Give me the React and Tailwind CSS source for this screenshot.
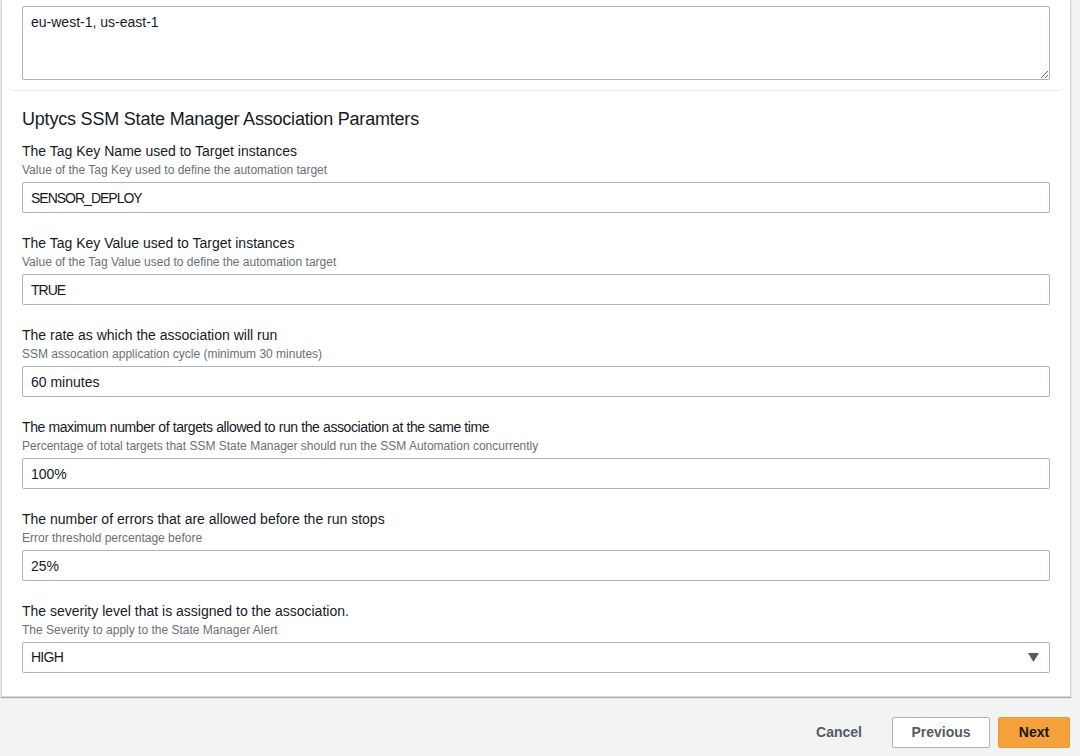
import { useState } from 'react';

const fields = [
  {
    label: 'The Tag Key Name used to Target instances',
    desc: 'Value of the Tag Key used to define the automation target',
    value: 'SENSOR_DEPLOY',
    valueClass: 'tracking-[-1px]',
  },
  {
    label: 'The Tag Key Value used to Target instances',
    desc: 'Value of the Tag Value used to define the automation target',
    value: 'TRUE',
    valueClass: 'tracking-[-1px]',
  },
  {
    label: 'The rate as which the association will run',
    desc: 'SSM assocation application cycle (minimum 30 minutes)',
    value: '60 minutes',
  },
  {
    label: 'The maximum number of targets allowed to run the association at the same time',
    labelClass: 'tracking-[-0.4px]',
    desc: 'Percentage of total targets that SSM State Manager should run the SSM Automation concurrently',
    value: '100%',
  },
  {
    label: 'The number of errors that are allowed before the run stops',
    desc: 'Error threshold percentage before',
    value: '25%',
  },
];

function Field({ label, labelClass = '', desc, children }) {
  return (
    <div className="flex flex-col">
      <label className={`text-[14px] leading-[20px] text-[#16191f] ${labelClass}`}>{label}</label>
      <p className="text-[12px] leading-[18px] text-[#687078]">{desc}</p>
      <div className="mt-[3px]">{children}</div>
    </div>
  );
}

export default function App() {
  const [values, setValues] = useState(fields.map(f => f.value));
  const [regions, setRegions] = useState('eu-west-1, us-east-1');
  const [severity, setSeverity] = useState('HIGH');

  return (
    <div
      className="h-[756px] overflow-hidden bg-[#f2f3f3] flex flex-col"
      style={{ fontFamily: '"Liberation Sans", Arial, sans-serif' }}
    >
      <div className="ml-[1px] w-[1070px] bg-white border border-t-0 border-[#d5dbdb] shadow-[0_1px_1px_rgba(0,28,36,0.3)] px-[20px] pb-[23px]">
        <p className="-mt-[16px] text-[12px] leading-[18px] text-[#687078]">
          Comma separated list of the regions in which the SSM State Manager association will be deployed (e.g. us-east-1)
        </p>
        <textarea
          value={regions}
          onChange={e => setRegions(e.target.value)}
          className="mt-[4px] block w-full h-[74px] border border-[#aab7b8] rounded-[2px] px-[8px] py-[5px] text-[14px] leading-[20px] text-[#16191f] outline-none"
        />
        <div className="-mx-[10px] mt-[10px] border-t border-[#eaeded]" />
        <h2 className="mt-[17px] text-[18px] leading-[22px] tracking-[-0.2px] text-[#16191f]">
          Uptycs SSM State Manager Association Paramters
        </h2>
        <div className="mt-[11px] flex flex-col gap-[20px]">
          {fields.map((f, i) => (
            <Field key={i} label={f.label} labelClass={f.labelClass} desc={f.desc}>
              <input
                value={values[i]}
                onChange={e => {
                  const next = [...values];
                  next[i] = e.target.value;
                  setValues(next);
                }}
                className={`block w-full h-[31px] border border-[#aab7b8] rounded-[2px] px-[8px] text-[14px] text-[#16191f] outline-none ${f.valueClass || ''}`}
              />
            </Field>
          ))}
          <Field
            label="The severity level that is assigned to the association."
            desc="The Severity to apply to the State Manager Alert"
          >
            <div className="relative">
              <select
                value={severity}
                onChange={e => setSeverity(e.target.value)}
                className="block w-full h-[31px] appearance-none bg-white border border-[#aab7b8] rounded-[2px] px-[8px] text-[14px] tracking-[-0.75px] text-[#16191f] outline-none"
              >
                <option>HIGH</option>
                <option>MEDIUM</option>
                <option>LOW</option>
              </select>
              <svg
                className="absolute right-[11px] top-[11px] pointer-events-none"
                width="11"
                height="9"
                viewBox="0 0 11 9"
              >
                <path d="M0 0 H11 L5.5 9 Z" fill="#545b64" />
              </svg>
            </div>
          </Field>
        </div>
      </div>

      <div className="mt-[20px] flex items-center justify-end pr-[10px] text-[14px] font-bold">
        <button className="h-[31px] px-[20px] text-[#545b64]">Cancel</button>
        <button className="ml-[10px] h-[31px] w-[98px] bg-white border border-[#aab7b8] rounded-[2px] text-[#545b64]">
          Previous
        </button>
        <button className="ml-[8px] h-[31px] w-[72px] bg-[#f4a13a] border border-[#ec9a30] rounded-[2px] text-[#16191f]">
          Next
        </button>
      </div>
    </div>
  );
}
